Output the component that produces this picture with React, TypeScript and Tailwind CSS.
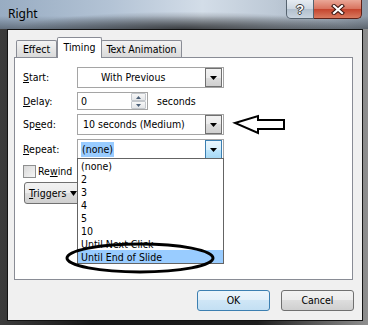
import React from "react";

function Tri({ c = "#000", w = 7, h = 4, up = false }: { c?: string; w?: number; h?: number; up?: boolean }) {
  return (
    <svg width={w} height={h} viewBox={`0 0 ${w} ${h}`} className="block">
      <path d={up ? `M0 ${h}H${w}L${w / 2} 0Z` : `M0 0H${w}L${w / 2} ${h}Z`} fill={c} />
    </svg>
  );
}

function Combo({ children, active = false }: { children: React.ReactNode; active?: boolean }) {
  return (
    <div className="flex h-[21px] w-[147px] items-center border border-[#a5a5a5] bg-white">
      <div className="flex h-full flex-1 items-center overflow-hidden whitespace-nowrap">{children}</div>
      <div
        className={
          active
            ? "mr-[1px] flex h-[19px] w-[17px] items-center justify-center border border-[#3c7fb1] bg-[linear-gradient(#eaf6fd,#d9f0fc_50%,#bee6fd_50%,#a7d9f5)]"
            : "mr-[1px] flex h-[19px] w-[17px] items-center justify-center border border-[#707070] bg-[linear-gradient(#f2f2f2,#ebebeb_50%,#dddddd_50%,#cfcfcf)]"
        }
      >
        <Tri />
      </div>
    </div>
  );
}

const items = ["(none)", "2", "3", "4", "5", "10", "Until Next Click", "Until End of Slide"];

export default function App() {
  return (
    <div className="relative flex h-[325px] w-[368px] flex-col overflow-hidden bg-[linear-gradient(to_right,#3c3c3c,#151515_25%,#1e1e1e_70%,#8f8f8f)]">
      {/* title bar */}
      <div className="flex h-[29px] shrink-0 items-start bg-[radial-gradient(ellipse_45%_60%_at_50%_100%,rgba(0,0,0,0.55),rgba(0,0,0,0)),linear-gradient(to_bottom,rgba(0,0,0,0)_55%,rgba(0,0,0,0.35)),linear-gradient(to_right,#98acc2,#b3c3d5_30%,#d3dde8_55%,#bcc8d5_75%,#8e9aa8)]">
        <span className="ml-[8px] mt-[6px] font-['Noto_Sans',sans-serif] text-[12px] leading-[16px] text-black">Right</span>
        <div className="ml-auto mr-[6px] flex">
          <div className="flex h-[19px] w-[28px] items-center justify-center rounded-bl-[5px] border border-t-0 border-[#56636f] bg-[linear-gradient(#e6ecf2,#cdd7e1_50%,#b1bfcd_50%,#c9d4df)]">
            <span className="font-['Liberation_Sans',sans-serif] text-[13px] font-bold leading-none text-white [text-shadow:1px_0_0_#3a3a3a,-1px_0_0_#3a3a3a,0_1px_0_#3a3a3a,0_-1px_0_#3a3a3a]">
              ?
            </span>
          </div>
          <div className="flex h-[19px] w-[48px] items-center justify-center rounded-br-[5px] border border-l-0 border-t-0 border-[#5e2118] bg-[linear-gradient(#eaa797,#d8725d_50%,#c4432c_50%,#d97a5f)]">
            <svg width="14" height="11" viewBox="0 0 14 11">
              <path d="M3 2L11 9M11 2L3 9" stroke="#3b1510" strokeWidth="4.2" strokeLinecap="square" />
              <path d="M3 2L11 9M11 2L3 9" stroke="#fff" strokeWidth="2.2" strokeLinecap="square" />
            </svg>
          </div>
        </div>
      </div>

      {/* client area */}
      <div className="ml-[7px] flex h-[292px] w-[356px] shrink-0 flex-col border border-[#121212] bg-[#f0f0f0] pl-[6px] pr-[9px] pt-[7px] font-['DejaVu_Sans_Condensed','DejaVu_Sans',sans-serif] text-[10.5px] leading-[13px] text-black [font-stretch:condensed]">
        {/* tabs */}
        <div className="relative z-10 ml-[2px] flex h-[20px] items-end">
          <div className="flex h-[17px] w-[41px] justify-center rounded-t-[2px] border border-b-0 border-[#898c95] bg-[linear-gradient(#f3f3f3,#e6e6e6_50%,#dadada)] pt-[2px]">
            Effect
          </div>
          <div className="-mb-[1px] flex h-[21px] w-[45px] justify-center rounded-t-[2px] border border-b-0 border-[#898c95] bg-white pt-[3px]">
            Timing
          </div>
          <div className="-ml-[1px] flex h-[17px] w-[81px] justify-center rounded-t-[2px] border border-b-0 border-[#898c95] bg-[linear-gradient(#f3f3f3,#e6e6e6_50%,#dadada)] pt-[2px]">
            Text Animation
          </div>
        </div>

        {/* panel */}
        <div className="relative h-[223px] w-[339px] shrink-0 border border-[#898c95] bg-white">
          <div className="flex flex-col gap-[4px] pl-[8px] pt-[9px]">
            <div className="flex items-center">
              <span className="w-[54px]">
                <u>S</u>tart:
              </span>
              <Combo>
                <span className="pl-[23px]">With Previous</span>
              </Combo>
            </div>
            <div className="flex items-center">
              <span className="w-[54px]">
                <u>D</u>elay:
              </span>
              <div className="flex h-[18px] w-[71px] items-center border border-[#a5a5a5] bg-white">
                <span className="flex-1 pl-[3px]">0</span>
                <div className="mr-[1px] flex h-[16px] w-[15px] flex-col">
                  <div className="flex h-[8px] items-center justify-center rounded-[1px] border border-[#c3c7cc] bg-[linear-gradient(#f7f7f7,#e4e6e9)]">
                    <Tri c="#4c6078" w={5} h={3} up />
                  </div>
                  <div className="flex h-[8px] items-center justify-center rounded-[1px] border border-[#c3c7cc] bg-[linear-gradient(#f7f7f7,#e4e6e9)]">
                    <Tri c="#4c6078" w={5} h={3} />
                  </div>
                </div>
              </div>
              <span className="ml-[9px]">seconds</span>
            </div>
            <div className="flex items-center">
              <span className="w-[54px]">
                Sp<u>e</u>ed:
              </span>
              <Combo>
                <span className="pl-[5px]">10 seconds (Medium)</span>
              </Combo>
            </div>
            <div className="flex items-center">
              <span className="w-[54px]">
                <u>R</u>epeat:
              </span>
              <Combo active>
                <span className="ml-[3px] bg-[#99ccff] px-[1px] leading-[15px]">(none)</span>
              </Combo>
            </div>
            <div className="mt-[1px] flex h-[13px] items-center">
              <div className="h-[13px] w-[13px] shrink-0 border border-[#8e8f8f] bg-[linear-gradient(135deg,#d8d8d8,#f6f6f6)]" />
              <span className="ml-[2px] w-[39px] overflow-hidden whitespace-nowrap">
                Re<u>w</u>ind
              </span>
            </div>
            <div className="ml-[1px] flex h-[22px] w-[90px] items-center rounded-[3px] border border-[#707070] bg-[linear-gradient(#f2f2f2,#ebebeb_50%,#dddddd_50%,#cfcfcf)] pl-[4px]">
              <span>
                <u>T</u>riggers
              </span>
              <span className="ml-[4px]">
                <Tri w={7} h={5} />
              </span>
            </div>
          </div>

          {/* dropdown list */}
          <div className="absolute left-[62px] top-[100px] w-[147px] border border-[#646464] bg-white">
            {items.map((it) => (
              <div
                key={it}
                className={
                  it === "Until End of Slide"
                    ? "h-[13px] whitespace-nowrap bg-[#99ccff] pl-[3px] leading-[15px]"
                    : "h-[13px] whitespace-nowrap pl-[3px] leading-[15px]"
                }
              >
                {it}
              </div>
            ))}
          </div>
        </div>

        {/* buttons */}
        <div className="-mr-[1px] mt-[10px] flex justify-end gap-[11px]">
          <div className="flex h-[21px] w-[73px] items-center justify-center rounded-[3px] border border-[#3c7fb1] bg-[linear-gradient(#ecf5fb,#e1eff9_50%,#cfe6f6_50%,#c3dff3)]">
            OK
          </div>
          <div className="flex h-[21px] w-[73px] items-center justify-center rounded-[3px] border border-[#707070] bg-[linear-gradient(#f2f2f2,#ebebeb_50%,#dddddd_50%,#cfcfcf)]">
            Cancel
          </div>
        </div>
      </div>

      {/* annotations */}
      <svg className="pointer-events-none absolute left-0 top-0" width="368" height="325" viewBox="0 0 368 325">
        <path d="M235 123L258 116V120H284V129H258V133Z" fill="none" stroke="#000" strokeWidth="2" strokeLinejoin="miter" />
        <ellipse cx="140" cy="258" rx="73" ry="14" fill="none" stroke="#000" strokeWidth="3" />
      </svg>
    </div>
  );
}
